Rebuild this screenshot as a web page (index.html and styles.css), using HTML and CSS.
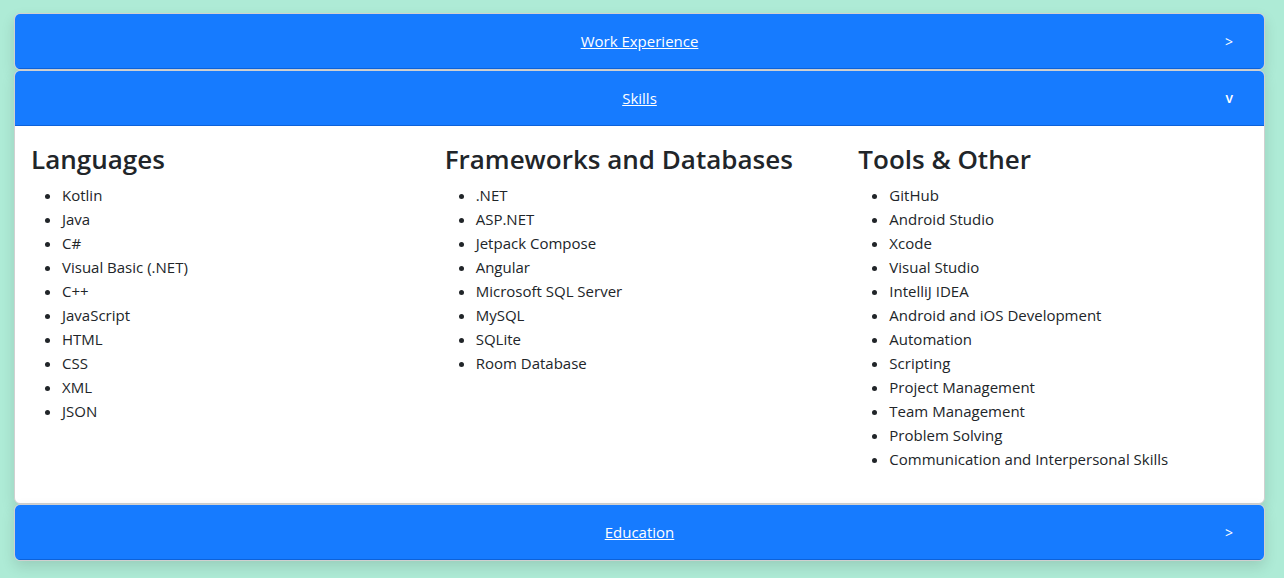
FILE: index.html
```html
<!DOCTYPE html>
<html lang="en">
<head>
<meta charset="utf-8">
<title>Resume</title>
<link rel="stylesheet" href="styles.css">
</head>
<body>
<div class="accordion">
  <section class="card">
    <div class="card-header">
      <a class="title" href="#">Work Experience</a>
      <span class="chev">&gt;</span>
    </div>
  </section>
  <section class="card">
    <div class="card-header">
      <a class="title" href="#">Skills</a>
      <span class="chev chev-open">v</span>
    </div>
    <div class="card-body">
      <div class="row">
        <div class="col">
          <h3>Languages</h3>
          <ul>
            <li>Kotlin</li>
            <li>Java</li>
            <li>C#</li>
            <li>Visual Basic (.NET)</li>
            <li>C++</li>
            <li>JavaScript</li>
            <li>HTML</li>
            <li>CSS</li>
            <li>XML</li>
            <li>JSON</li>
          </ul>
        </div>
        <div class="col">
          <h3>Frameworks and Databases</h3>
          <ul>
            <li>.NET</li>
            <li>ASP.NET</li>
            <li>Jetpack Compose</li>
            <li>Angular</li>
            <li>Microsoft SQL Server</li>
            <li>MySQL</li>
            <li>SQLite</li>
            <li>Room Database</li>
          </ul>
        </div>
        <div class="col">
          <h3>Tools &amp; Other</h3>
          <ul>
            <li>GitHub</li>
            <li>Android Studio</li>
            <li>Xcode</li>
            <li>Visual Studio</li>
            <li>IntelliJ IDEA</li>
            <li>Android and iOS Development</li>
            <li>Automation</li>
            <li>Scripting</li>
            <li>Project Management</li>
            <li>Team Management</li>
            <li>Problem Solving</li>
            <li>Communication and Interpersonal Skills</li>
          </ul>
        </div>
      </div>
    </div>
  </section>
  <section class="card">
    <div class="card-header">
      <a class="title" href="#">Education</a>
      <span class="chev">&gt;</span>
    </div>
  </section>
</div>
</body>
</html>
```
FILE: styles.css
```css
* { box-sizing: border-box; }
html, body { margin: 0; padding: 0; }
body {
  background: #aeebd6;
  font-family: "Open Sans", "Noto Sans", sans-serif;
  font-size: 16px;
  line-height: 1.5;
  color: #212529;
}
.accordion {
  padding: 13px 19px 20px 14px;
  display: flex;
  flex-direction: column;
}
.card {
  background: #fff;
  border: 1px solid #d0d0d0;
  border-radius: 6px;
  box-shadow: 0 6px 14px rgba(0, 0, 0, 0.12);
  overflow: hidden;
}
.card-header {
  background: #167bff;
  border-bottom: 1px solid #0d62d9;
  height: 55px;
  display: flex;
  align-items: center;
  justify-content: center;
  position: relative;
}
.title {
  color: #fff;
  text-decoration: underline;
  font-size: 15px;
}
.chev {
  position: absolute;
  right: 31px;
  top: 20px;
  line-height: 16px;
  color: #fff;
  font-size: 14px;
  font-weight: 400;
}
.chev-open {
  font-weight: 600;
  top: 19px;
}
.card-body {
  padding: 16px;
}
.row {
  display: flex;
  margin: 0 -12px;
}
.col {
  flex: 1 1 0;
  padding: 0 12px;
}
h3 {
  margin: 0 0 7px;
  padding-top: 1px;
  font-size: 26px;
  font-weight: 600;
  line-height: 33px;
}
ul {
  margin: 0 0 16px;
  padding-left: 31px;
}
li {
  font-size: 15px;
  line-height: 24px;
}
```
